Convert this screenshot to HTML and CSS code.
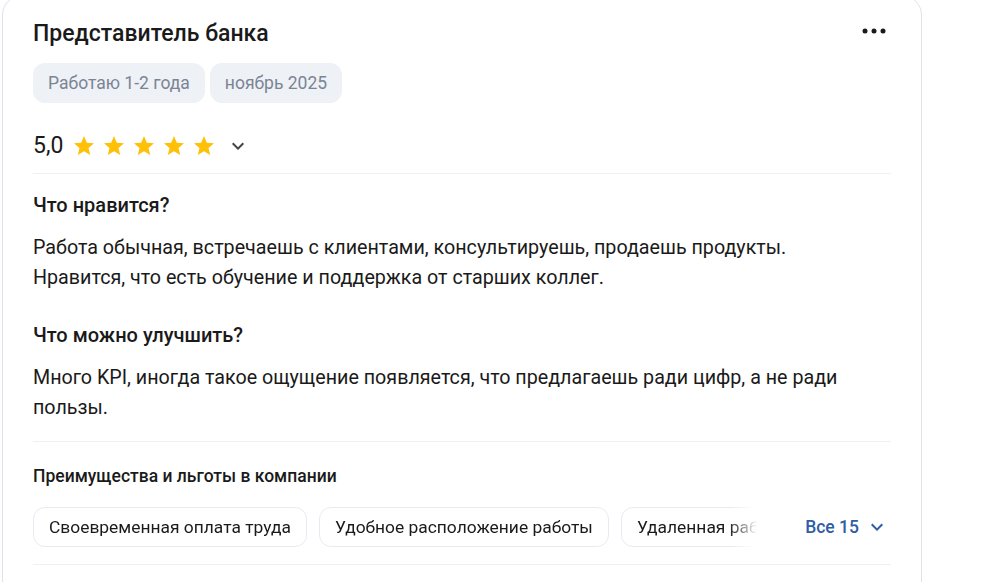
FILE: index.html
```html
<!DOCTYPE html>
<html lang="ru">
<head>
<meta charset="utf-8">
<title>Отзыв</title>
<link rel="stylesheet" href="styles.css">
</head>
<body>
<article class="card">
  <header class="head">
    <h2 class="title">Представитель банка</h2>
    <button class="more" aria-label="Ещё">
      <svg width="24" height="24" viewBox="0 0 24 24"><circle cx="3" cy="12" r="2.5"/><circle cx="12" cy="12" r="2.5"/><circle cx="21" cy="12" r="2.5"/></svg>
    </button>
  </header>
  <div class="tags">
    <span class="tag">Работаю 1-2 года</span>
    <span class="tag">ноябрь 2025</span>
  </div>
  <div class="rating">
    <span class="score">5,0</span>
    <span class="stars">
      <svg class="star" viewBox="0 0 24 24"><path d="M12 17.27L18.18 21l-1.64-7.03L22 9.24l-7.19-.61L12 2 9.19 8.63 2 9.24l5.46 4.73L5.82 21z"/></svg>
      <svg class="star" viewBox="0 0 24 24"><path d="M12 17.27L18.18 21l-1.64-7.03L22 9.24l-7.19-.61L12 2 9.19 8.63 2 9.24l5.46 4.73L5.82 21z"/></svg>
      <svg class="star" viewBox="0 0 24 24"><path d="M12 17.27L18.18 21l-1.64-7.03L22 9.24l-7.19-.61L12 2 9.19 8.63 2 9.24l5.46 4.73L5.82 21z"/></svg>
      <svg class="star" viewBox="0 0 24 24"><path d="M12 17.27L18.18 21l-1.64-7.03L22 9.24l-7.19-.61L12 2 9.19 8.63 2 9.24l5.46 4.73L5.82 21z"/></svg>
      <svg class="star" viewBox="0 0 24 24"><path d="M12 17.27L18.18 21l-1.64-7.03L22 9.24l-7.19-.61L12 2 9.19 8.63 2 9.24l5.46 4.73L5.82 21z"/></svg>
    </span>
    <svg class="chev chev-gray" viewBox="0 0 24 24"><path d="M16.59 8.59L12 13.17 7.41 8.59 6 10l6 6 6-6z"/></svg>
  </div>
  <div class="body">
    <section class="block">
      <h3 class="q">Что нравится?</h3>
      <p class="a">Работа обычная, встречаешь с клиентами, консультируешь, продаешь продукты.<br>Нравится, что есть обучение и поддержка от старших коллег.</p>
    </section>
    <section class="block">
      <h3 class="q">Что можно улучшить?</h3>
      <p class="a">Много KPI, иногда такое ощущение появляется, что предлагаешь ради цифр, а не ради<br>пользы.</p>
    </section>
  </div>
  <div class="benefits">
    <h4 class="bh">Преимущества и льготы в компании</h4>
    <div class="brow">
      <div class="blist">
        <span class="bchip">Своевременная оплата труда</span>
        <span class="bchip">Удобное расположение работы</span>
        <span class="bchip">Удаленная работа</span>
      </div>
      <button class="all"><span>Все 15</span>
        <svg class="chev chev-blue" viewBox="0 0 24 24"><path d="M16.59 8.59L12 13.17 7.41 8.59 6 10l6 6 6-6z"/></svg>
      </button>
    </div>
  </div>
</article>
</body>
</html>
```
FILE: styles.css
```css
* { box-sizing: border-box; }
html, body { margin: 0; padding: 0; background: #fff; }
body {
  font-family: Roboto, "Noto Sans", Arial, sans-serif;
  color: #1a1a1a;
  overflow: hidden;
}
.card {
  width: 920px;
  margin: -5px 0 0 2px;
  border: 1px solid #dde2ea;
  border-radius: 20px;
  padding: 24px 30px 40px 30px;
  background: #fff;
}
.head {
  display: flex;
  align-items: flex-start;
  justify-content: space-between;
}
.title {
  margin: 0;
  font-size: 23px;
  line-height: 28px;
  font-weight: 500;
  color: #1a1a1a;
}
.more {
  border: 0;
  background: none;
  padding: 0;
  margin: -1px 5px 0 0;
  width: 24px;
  height: 24px;
  display: flex;
}
.more svg { fill: #1a1a1a; }
.tags {
  display: flex;
  gap: 5px;
  margin-top: 15px;
}
.tag {
  height: 40px;
  display: flex;
  align-items: center;
  padding: 0 15px;
  border-radius: 12px;
  background: #eef1f6;
  color: #7b8494;
  font-size: 17.5px;
}
.rating {
  display: flex;
  align-items: center;
  height: 28px;
  margin-top: 29px;
}
.score {
  font-size: 23px;
  line-height: 28px;
  color: #1a1a1a;
  margin-right: 9px;
}
.stars {
  display: flex;
  gap: 6px;
}
.star {
  width: 24px;
  height: 24px;
  fill: #ffc107;
}
.chev {
  width: 24px;
  height: 24px;
}
.chev-gray {
  fill: #444;
  margin-left: 10px;
}
.body {
  margin-top: 13px;
  border-top: 1px solid #eef0f4;
  border-bottom: 1px solid #eef0f4;
  padding: 19px 0 18px;
  display: flex;
  flex-direction: column;
  gap: 30px;
}
.q {
  margin: 0;
  font-size: 20px;
  line-height: 24px;
  font-weight: 500;
}
.a {
  margin: 16px 0 0;
  font-size: 19.7px;
  line-height: 30px;
}
.benefits {
  padding: 22px 0 17px;
  border-bottom: 1px solid #eef0f4;
}
.bh {
  margin: 0;
  font-size: 17.5px;
  line-height: 24px;
  font-weight: 500;
}
.brow {
  display: flex;
  align-items: center;
  margin-top: 19px;
}
.blist {
  flex: 1;
  min-width: 0;
  display: flex;
  gap: 12px;
  overflow: hidden;
  -webkit-mask-image: linear-gradient(to right, #000 calc(100% - 28px), transparent);
  mask-image: linear-gradient(to right, #000 calc(100% - 28px), transparent);
}
.bchip {
  flex: none;
  height: 40px;
  display: flex;
  align-items: center;
  padding: 0 15px;
  border: 1px solid #e7eaf0;
  border-radius: 12px;
  font-size: 17.4px;
  color: #1a1a1a;
  white-space: nowrap;
}
.all {
  flex: none;
  display: flex;
  align-items: center;
  gap: 6px;
  border: 0;
  background: none;
  padding: 0 2px 0 48px;
  font-family: inherit;
  font-size: 17.5px;
  font-weight: 500;
  color: #2f5da6;
  white-space: nowrap;
}
.chev-blue { fill: #2f5da6; }
```
